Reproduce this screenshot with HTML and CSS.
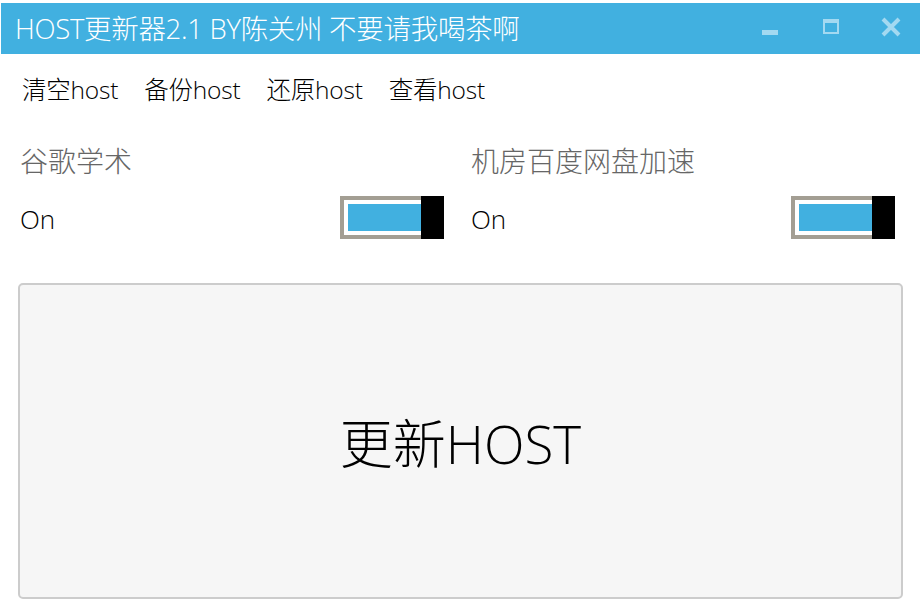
FILE: index.html
```html
<!DOCTYPE html>
<html lang="zh-CN">
<head>
<meta charset="utf-8">
<title>HOST更新器2.1</title>
<link rel="stylesheet" href="styles.css">
</head>
<body>
<div class="window">
  <header class="titlebar">
    <span class="title">HOST更新器2.1 BY陈关州 不要请我喝茶啊</span>
    <div class="controls">
      <svg class="ctl" width="36" height="36" viewBox="0 0 36 36"><rect x="10" y="19" width="16" height="5" fill="#a3d9f1"/></svg>
      <svg class="ctl" width="36" height="36" viewBox="0 0 36 36"><rect x="11" y="8" width="16" height="15" fill="#a3d9f1"/><rect x="13" y="12" width="12" height="9" fill="#41b0e0"/></svg>
      <svg class="ctl" width="36" height="36" viewBox="0 0 36 36"><path d="M11 8 L27 24 M27 8 L11 24" stroke="#a3d9f1" stroke-width="4" fill="none"/></svg>
    </div>
  </header>
  <nav class="menu">
    <span class="menu-item">清空host</span>
    <span class="menu-item">备份host</span>
    <span class="menu-item">还原host</span>
    <span class="menu-item">查看host</span>
  </nav>
  <section class="options">
    <div class="option">
      <div class="label">谷歌学术</div>
      <div class="switch-row">
        <span class="state">On</span>
        <span class="toggle"><span class="track"></span><span class="thumb"></span></span>
      </div>
    </div>
    <div class="option">
      <div class="label">机房百度网盘加速</div>
      <div class="switch-row">
        <span class="state">On</span>
        <span class="toggle"><span class="track"></span><span class="thumb"></span></span>
      </div>
    </div>
  </section>
  <button class="update">更新HOST</button>
</div>
</body>
</html>
```

FILE: styles.css
```css
html, body {
  margin: 0;
  padding: 0;
  background: #ffffff;
}
body {
  font-family: "Open Sans", "Noto Sans CJK SC", sans-serif;
  font-weight: 300;
  color: #000;
}
.window {
  width: 922px;
  height: 602px;
  padding: 3px 2px 0 1px;
  box-sizing: border-box;
}
.titlebar {
  height: 51px;
  background: #41b0e0;
  display: flex;
  align-items: center;
  justify-content: space-between;
  padding-left: 14px;
}
.title {
  color: #ffffff;
  font-size: 27.5px;
  line-height: 1;
  white-space: nowrap;
  letter-spacing: -0.3px;
}
.controls {
  display: flex;
  align-items: center;
  gap: 24px;
  padding-right: 12px;
  height: 100%;
}
.ctl {
  display: block;
}
.menu {
  height: 72px;
  display: flex;
  align-items: center;
  gap: 26px;
  padding-left: 21px;
}
.menu-item {
  font-size: 24.5px;
  line-height: 1;
  letter-spacing: -0.2px;
}
.options {
  display: grid;
  grid-template-columns: 424px 424px;
  column-gap: 27px;
  padding: 15px 0 0 19px;
}
.label {
  font-size: 28px;
  line-height: 40px;
  color: #666666;
}
.switch-row {
  margin-top: 15px;
  height: 43px;
  display: flex;
  align-items: center;
  justify-content: space-between;
}
.state {
  font-size: 26px;
  line-height: 1;
  padding-top: 3px;
}
.toggle {
  display: flex;
  width: 104px;
  height: 43px;
}
.track {
  flex: 1;
  border: 4px solid #a39e93;
  border-right: 0;
  box-shadow: inset 4px 0 0 #ffffff, inset 0 4px 0 #ffffff, inset 0 -4px 0 #ffffff;
  background: #41b0e0;
}
.thumb {
  width: 23px;
  background: #000000;
}
.update {
  display: flex;
  align-items: center;
  justify-content: center;
  margin: 44px 0 0 17px;
  width: 885px;
  height: 316px;
  background: #f6f6f6;
  border: 2px solid #cccccc;
  border-radius: 5px;
  font-family: "Open Sans", "Noto Sans CJK SC", sans-serif;
  font-weight: 300;
  font-size: 53px;
  color: #000;
  padding: 0;
}
```
